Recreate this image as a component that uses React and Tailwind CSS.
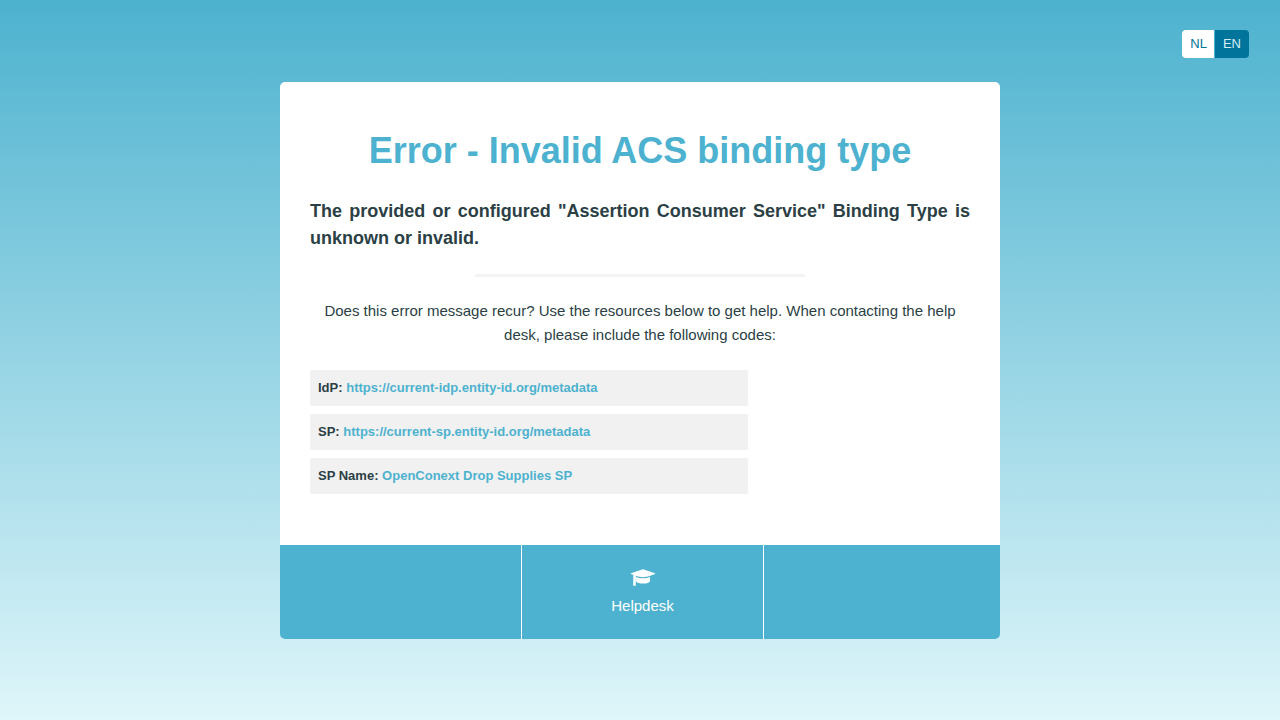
const codes = [
  { label: "IdP:", value: "https://current-idp.entity-id.org/metadata" },
  { label: "SP:", value: "https://current-sp.entity-id.org/metadata" },
  { label: "SP Name:", value: "OpenConext Drop Supplies SP" },
];

function LanguageSwitch() {
  return (
    <nav aria-label="Language" className="absolute right-[31px] top-[30px] flex overflow-hidden rounded text-[13px] leading-[28px]">
      <a href="#nl" className="border-r border-[#4db2cf] bg-white pl-2 pr-[7px] text-[#00749a]">NL</a>
      <a href="#en" aria-current="true" className="bg-[#00749a] px-2 text-[#d5eef5]">EN</a>
    </nav>
  );
}

function GraduationCap() {
  return (
    <svg viewBox="0 0 26 18" className="h-[18px] w-[26px]" fill="currentColor" aria-hidden="true">
      <path d="M13 .2 25 4.300c.5.200.5.600 0 .8L19.500 7C17.500 7.700 15.300 8.200 13 8.200S8.500 7.700 6.500 7L1 5.100C.5 4.900.5 4.500 1 4.300Z" />
      <path d="M6 8C8 8.800 10.500 9.300 13 9.300s5-.5 7-1.300v4c0 1.500-3.100 2.600-7 2.600-2.700 0-5-.5-6.200-1.400L6 12Z" />
      <path d="M3.300 5.500 5.800 6.500V16.800H3.200Z" />
    </svg>
  );
}

export default function App() {
  return (
    <div className="relative flex min-h-screen items-center justify-center bg-linear-to-b/srgb from-[#4db2cf] to-[#dff6fa] font-['Liberation_Sans',Arial,sans-serif] text-[#2b3f45]">
      <LanguageSwitch />
      <main className="w-full max-w-[720px] overflow-hidden rounded-[5px] bg-white">
        <section className="px-[30px] pb-[51px] pt-[42px]">
          <h1 className="text-center text-[36px] font-bold leading-[54px] text-[#4db2cf]">Error - Invalid ACS binding type</h1>
          <p className="mt-5 text-justify text-[18px] font-bold leading-[27px]">
            The provided or configured "Assertion Consumer Service" Binding Type is unknown or invalid.
          </p>
          <hr className="mx-auto mt-[22px] w-1/2 border-t-[3px] border-[#f3f3f3]" />
          <p className="mt-[22px] text-center text-[15px] leading-[24px]">
            Does this error message recur? Use the resources below to get help. When contacting the help desk, please include the following codes:
          </p>
          <ul className="mt-[23px] flex max-w-[438px] flex-col gap-2">
            {codes.map((code) => (
              <li key={code.label} className="rounded-xs bg-[#f1f1f1] px-2 text-[13px] font-bold leading-[36px]">
                {code.label} <span className="text-[#4db2cf]">{code.value}</span>
              </li>
            ))}
          </ul>
        </section>
        <footer className="grid grid-cols-[242fr_242fr_236fr] bg-[#4db2cf] text-white">
          <div className="border-r border-white" />
          <a href="#helpdesk" className="flex flex-col items-center gap-[7px] border-r border-white pb-[21px] pt-6 text-[15px] leading-[24px]">
            <GraduationCap />
            Helpdesk
          </a>
          <div />
        </footer>
      </main>
    </div>
  );
}
